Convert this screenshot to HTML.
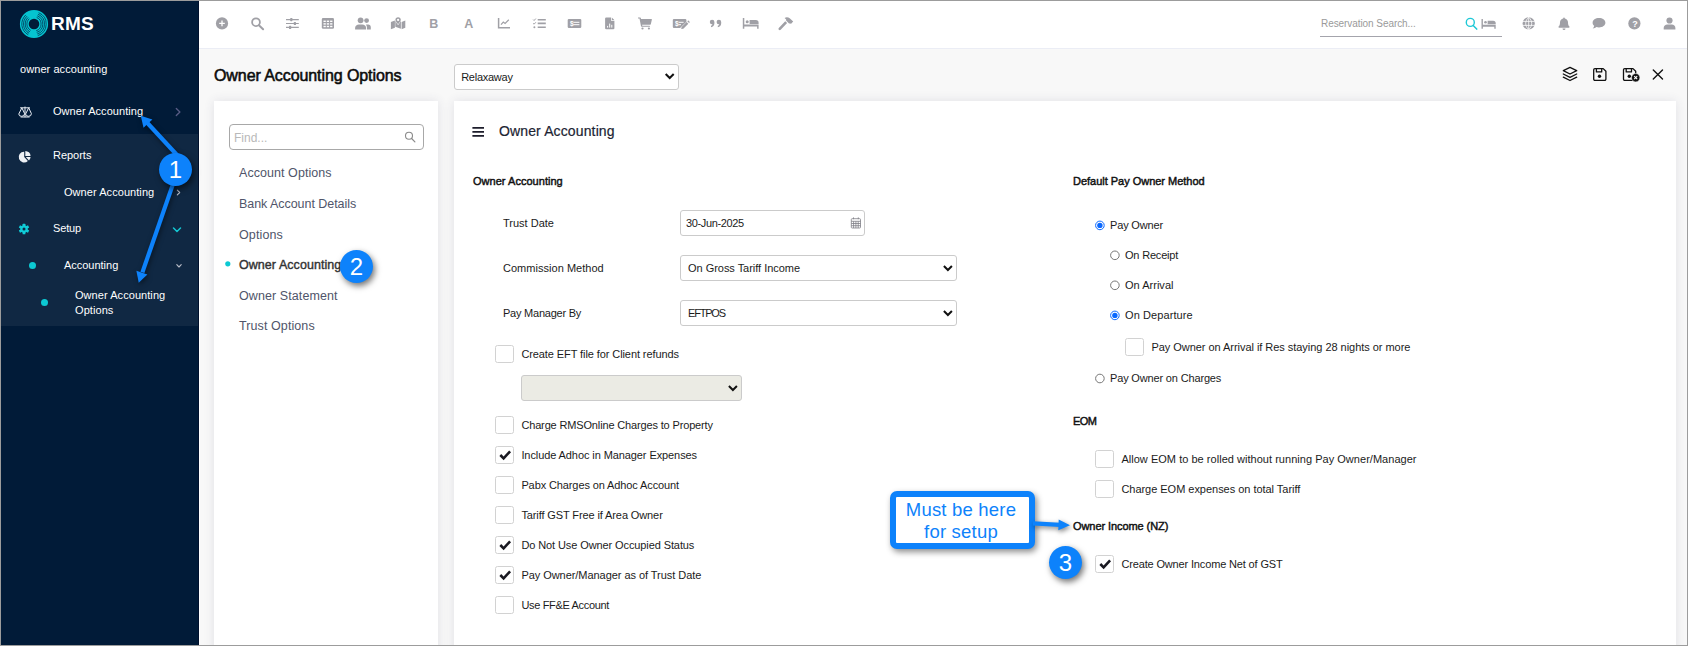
<!DOCTYPE html>
<html lang="en"><head><meta charset="utf-8"><title>Owner Accounting Options</title>
<style>
*{box-sizing:border-box}
html,body{margin:0;padding:0;width:1688px;height:646px;overflow:hidden;background:#f8f8f8;font-family:"Liberation Sans",sans-serif;font-size:11px;color:#1b1b1b}
.abs{position:absolute}
svg{position:absolute;overflow:visible}
#frame{position:absolute;left:0;top:0;width:1688px;height:646px;border:1px solid #9c9c9c;z-index:100;pointer-events:none}
#side{position:absolute;left:0;top:0;width:199px;height:646px;background:#011b38;box-shadow:inset -1px 0 0 #00102c}
#side .sec{position:absolute;left:0;top:134px;width:199px;height:192px;background:#102843;box-shadow:inset -1px 0 0 #00102c}
.t{position:absolute;color:#fff;font-size:11px;white-space:nowrap;line-height:15px}
.dot{position:absolute;width:7px;height:7px;border-radius:50%;background:#0cc9d3}
#top{position:absolute;left:199px;top:0;width:1489px;height:49px;background:#fff;border-bottom:1px solid #ebedf5}
#vline{position:absolute;left:199px;top:0;width:1px;height:646px;background:#fff}
.card{position:absolute;background:#fff;box-shadow:0 0 10px rgba(60,60,100,.12)}
.lbl{position:absolute;white-space:nowrap;font-size:11px;line-height:14px;color:#1b1b1b}
.hd{position:absolute;white-space:nowrap;font-size:11px;line-height:14px;font-weight:400;color:#111;-webkit-text-stroke:.45px #111}
.cb{position:absolute;width:19px;height:18px;border:1px solid #d2d2d2;border-radius:2.5px;background:#fff}
.sel{position:absolute;border:1px solid #cbcbcb;border-radius:3px;background:#fff;font-size:11px;line-height:24px;padding-left:7px;color:#1b1b1b;white-space:nowrap}
.nav{position:absolute;font-size:12.5px;color:#50556a;white-space:nowrap;line-height:16px}
.navsel{color:#333;font-weight:400;-webkit-text-stroke:.4px #333}
.num{position:absolute;width:33px;height:33px;border-radius:50%;background:#0d82fb;color:#fff;font-size:24px;line-height:33px;text-align:center;box-shadow:2px 3px 6px rgba(0,0,0,.55);z-index:50}
.call{position:absolute;left:890px;top:491px;width:145px;height:58px;border:6px solid #0d82fb;border-radius:7px;background:#fff;color:#0d82fb;font-size:18.5px;letter-spacing:.2px;line-height:21.6px;text-align:center;padding:2px 3px 0 0;box-shadow:2px 3px 6px rgba(0,0,0,.45);z-index:40}
.title{position:absolute;font-size:16px;font-weight:400;-webkit-text-stroke:.55px #0b0b0b;color:#0b0b0b;white-space:nowrap;line-height:20px}
.h2{position:absolute;font-size:14px;color:#1c2433;-webkit-text-stroke:.2px #1c2433;white-space:nowrap;line-height:18px}
.find{position:absolute;font-size:12px;color:#b9b9b9;line-height:14px;white-space:nowrap}
.rsv{position:absolute;font-size:10px;color:#9a9a9a;white-space:nowrap;line-height:14px;z-index:3}

</style></head><body>
<div id="side">
  <div class="sec"></div>
  <svg style="left:0;top:0" width="60" height="48" viewBox="0 0 60 48">
    <circle cx="34.0" cy="24.0" r="9.7" fill="none" stroke="#05c4d0" stroke-width="8.8"/>
    <path d="M36.66 17.42A7.1 7.1 0 0 1 36.19 30.75M30.67 30.27A7.1 7.1 0 0 1 29.25 18.72M37.30 15.84A8.8 8.8 0 0 1 36.72 32.37M29.87 31.77A8.8 8.8 0 0 1 28.11 17.46M37.93 14.26A10.5 10.5 0 0 1 37.24 33.99M29.07 33.27A10.5 10.5 0 0 1 26.97 16.20M38.57 12.69A12.2 12.2 0 0 1 37.77 35.60M28.27 34.77A12.2 12.2 0 0 1 25.84 14.93" fill="none" stroke="#012c4c" stroke-width=".85" opacity=".9"/>
  </svg>
  <div class="t" style="left:51px;top:14px;font-weight:700;font-size:19px;line-height:20px;letter-spacing:.2px">RMS</div>
  <div class="dot" style="left:29px;top:262px"></div>
  <div class="dot" style="left:41px;top:299px"></div>
</div>
<div id="vline"></div>
<div id="top">
    <div class="abs" style="left:1121px;top:36px;width:182px;height:1px;background:#a4a4ac"></div>
</div>
<div class="sel" style="left:454px;top:64px;width:225px;height:26px"></div>

<div class="card" style="left:214px;top:101px;width:224px;height:560px"></div>
<div class="abs" style="left:229px;top:124px;width:195px;height:26px;border:1px solid #a8a8a8;border-radius:4px;background:#fff"></div>

<div class="card" style="left:454px;top:101px;width:1222px;height:560px"></div>

<div class="sel" style="left:680px;top:210px;width:185px;height:26px;padding-left:6px"></div>
<div class="sel" style="left:680px;top:255px;width:277px;height:26px"></div>
<div class="sel" style="left:680px;top:300px;width:277px;height:26px"></div>
<div class="cb" style="left:495px;top:345px"></div>
<div class="sel" style="left:521px;top:375px;width:221px;height:26px;background:#ebebe4"></div>

<div class="cb" style="left:495px;top:416px"></div>
<div class="cb on" style="left:495px;top:446px"></div>
<div class="cb" style="left:495px;top:476px"></div>
<div class="cb" style="left:495px;top:506px"></div>
<div class="cb on" style="left:495px;top:536px"></div>
<div class="cb on" style="left:495px;top:566px"></div>
<div class="cb" style="left:495px;top:596px"></div>

<div class="cb" style="left:1125px;top:338px"></div>
<div class="cb" style="left:1095px;top:450px"></div>
<div class="cb" style="left:1095px;top:480px"></div>
<div class="cb on" style="left:1095px;top:555px"></div>

<div class="call">Must be here<br>for setup</div>
<div class="num" style="left:159px;top:153px">1</div>
<div class="num" style="left:340px;top:250px">2</div>
<div class="num" style="left:1049px;top:546px">3</div>
<div class="t" style="left:20px;top:62px;letter-spacing:0.07px;">owner accounting</div>
<div class="t" style="left:53px;top:104px;letter-spacing:0.05px;">Owner Accounting</div>
<div class="t" style="left:53px;top:148px;letter-spacing:-0.02px;">Reports</div>
<div class="t" style="left:64px;top:185px;letter-spacing:0.06px;">Owner Accounting</div>
<div class="t" style="left:53px;top:221px;letter-spacing:-0.15px;">Setup</div>
<div class="t" style="left:64px;top:258px;letter-spacing:-0.02px;">Accounting</div>
<div class="t" style="left:75px;top:288px;letter-spacing:0.06px;">Owner Accounting</div>
<div class="t" style="left:75px;top:303px;letter-spacing:0.07px;">Options</div>
<div class="nav" style="left:239px;top:165px;letter-spacing:0.06px;">Account Options</div>
<div class="nav" style="left:239px;top:196px;letter-spacing:-0.05px;">Bank Account Details</div>
<div class="nav" style="left:239px;top:227px;letter-spacing:0.12px;">Options</div>
<div class="nav navsel" style="left:239px;top:257px;letter-spacing:0.05px;">Owner Accounting</div>
<div class="nav" style="left:239px;top:288px;letter-spacing:0.09px;">Owner Statement</div>
<div class="nav" style="left:239px;top:318px;letter-spacing:0.09px;">Trust Options</div>
<div class="hd" style="left:473px;top:174px;letter-spacing:0.03px;">Owner Accounting</div>
<div class="lbl" style="left:503px;top:216px;letter-spacing:0.00px;">Trust Date</div>
<div class="lbl" style="left:503px;top:261px;letter-spacing:0.03px;">Commission Method</div>
<div class="lbl" style="left:503px;top:306px;letter-spacing:-0.23px;">Pay Manager By</div>
<div class="lbl" style="left:521.4px;top:347px;letter-spacing:-0.09px;">Create EFT file for Client refunds</div>
<div class="lbl" style="left:521.4px;top:418px;letter-spacing:-0.15px;">Charge RMSOnline Charges to Property</div>
<div class="lbl" style="left:521.4px;top:448px;letter-spacing:-0.09px;">Include Adhoc in Manager Expenses</div>
<div class="lbl" style="left:521.4px;top:478px;letter-spacing:-0.11px;">Pabx Charges on Adhoc Account</div>
<div class="lbl" style="left:521.4px;top:508px;letter-spacing:-0.11px;">Tariff GST Free if Area Owner</div>
<div class="lbl" style="left:521.4px;top:538px;letter-spacing:-0.10px;">Do Not Use Owner Occupied Status</div>
<div class="lbl" style="left:521.4px;top:568px;letter-spacing:-0.05px;">Pay Owner/Manager as of Trust Date</div>
<div class="lbl" style="left:521.4px;top:598px;letter-spacing:-0.33px;">Use FF&amp;E Account</div>
<div class="hd" style="left:1073px;top:174px;letter-spacing:-0.02px;">Default Pay Owner Method</div>
<div class="lbl" style="left:1110px;top:218px;letter-spacing:-0.16px;">Pay Owner</div>
<div class="lbl" style="left:1125px;top:248px;letter-spacing:-0.19px;">On Receipt</div>
<div class="lbl" style="left:1125px;top:278px;letter-spacing:0.02px;">On Arrival</div>
<div class="lbl" style="left:1125px;top:308px;letter-spacing:0.09px;">On Departure</div>
<div class="lbl" style="left:1151.4px;top:340px;letter-spacing:-0.04px;">Pay Owner on Arrival if Res staying 28 nights or more</div>
<div class="lbl" style="left:1110px;top:371px;letter-spacing:-0.16px;">Pay Owner on Charges</div>
<div class="hd" style="left:1073px;top:414px;letter-spacing:-0.52px;">EOM</div>
<div class="lbl" style="left:1121.4px;top:452px;letter-spacing:0.03px;">Allow EOM to be rolled without running Pay Owner/Manager</div>
<div class="lbl" style="left:1121.4px;top:482px;letter-spacing:-0.03px;">Charge EOM expenses on total Tariff</div>
<div class="hd" style="left:1073px;top:519px;letter-spacing:-0.08px;">Owner Income (NZ)</div>
<div class="lbl" style="left:1121.4px;top:557px;letter-spacing:-0.15px;">Create Owner Income Net of GST</div>
<div class="lbl" style="left:461.2px;top:70px;letter-spacing:-0.26px;">Relaxaway</div>
<div class="lbl" style="left:686px;top:216px;letter-spacing:-0.37px;">30-Jun-2025</div>
<div class="lbl" style="left:688px;top:261px;letter-spacing:-0.03px;">On Gross Tariff Income</div>
<div class="lbl" style="left:688px;top:306px;letter-spacing:-1.20px;">EFTPOS</div>
<div class="title" style="left:214px;top:66px;letter-spacing:-0.08px;">Owner Accounting Options</div>
<div class="h2" style="left:499px;top:122px;letter-spacing:0.13px;">Owner Accounting</div>
<div class="find" style="left:234px;top:131px;">Find...</div>
<div class="rsv" style="left:1321px;top:17px;letter-spacing:-0.07px;">Reservation Search...</div>

<svg style="left:0;top:0;z-index:5" width="1688" height="48" viewBox="0 0 1688 48">
<g fill="#a0a0a6" stroke="none">
  <!-- 1 plus-circle -->
  <circle cx="222" cy="23.4" r="6.1"/>
  <path d="M219.2 23.4h5.6M222 20.6v5.6" stroke="#fff" stroke-width="1.3" fill="none"/>
  <!-- 2 search -->
  <circle cx="256" cy="22.2" r="3.9" fill="none" stroke="#a0a0a6" stroke-width="1.8"/>
  <path d="M258.9 25.2l4.2 4.1" stroke="#a0a0a6" stroke-width="2" stroke-linecap="round" fill="none"/>
  <!-- 3 sliders -->
  <path d="M286 19.6h12.8M286 23.5h12.8M286 27.4h12.8" stroke="#a0a0a6" stroke-width="1.1" fill="none"/>
  <rect x="290.2" y="18" width="2.2" height="3.2" rx=".6"/><rect x="293.8" y="21.9" width="2.2" height="3.2" rx=".6"/><rect x="289" y="25.8" width="2.2" height="3.2" rx=".6"/>
  <!-- 4 table -->
  <rect x="321.800" y="18.100" width="12.200" height="10.700" rx="1.300"/>
  <g fill="#fff"><rect x="323.500" y="20.600" width="2.300" height="1.400"/><rect x="326.800" y="20.600" width="2.300" height="1.400"/><rect x="330.100" y="20.600" width="2.300" height="1.400"/><rect x="323.500" y="23.200" width="2.300" height="1.400"/><rect x="326.800" y="23.200" width="2.300" height="1.400"/><rect x="330.100" y="23.200" width="2.300" height="1.400"/><rect x="323.500" y="25.800" width="2.300" height="1.400"/><rect x="326.800" y="25.800" width="2.300" height="1.400"/><rect x="330.100" y="25.800" width="2.300" height="1.400"/></g>
  <!-- 5 users -->
  <circle cx="360.6" cy="20.3" r="2.9"/><path d="M355.1 29.6v-1.6c0-2.2 1.8-3.6 3.8-3.6h3.4c2 0 3.8 1.4 3.8 3.6v1.6z"/>
  <circle cx="366.6" cy="20.6" r="2.4"/><path d="M367 29.6v-1.9c0-1.200-.4-2.200-1.100-3.000c.3-.1.700-.2 1.100-.2h1.200c1.500 0 2.600 1.100 2.600 2.700v2.400z"/>
  <!-- 6 map-marked -->
  <path d="M390.900 21.900l4.000-1.500v7.400l-4.000 1.500z"/>
  <path d="M395.700 21.200c.5 1.300 1.500 2.700 2.400 3.700c.9-1.000 1.900-2.400 2.400-3.700l.4.150v7.500l-5.600-2.000v-5.800z"/>
  <path d="M401.600 21.900l3.700-1.400v7.300l-3.700 1.400z"/>
  <path fill-rule="evenodd" d="M398.100 17.200c1.600 0 2.700 1.200 2.700 2.600c0 1.400-1.700 3.400-2.700 4.400c-1.000-1.000-2.700-3.000-2.700-4.400c0-1.400 1.100-2.600 2.700-2.600zm0 1.600a1.100 1.100 0 1 0 0 2.200a1.100 1.100 0 0 0 0-2.200z"/>
  <!-- 9 chart-line -->
  <path d="M498.600 18.100v9.600h11.400" stroke="#a0a0a6" stroke-width="1.500" fill="none"/>
  <path d="M501.000 24.600l2.300-2.600l1.800 1.400l3.700-3.600" stroke="#a0a0a6" stroke-width="1.200" fill="none"/>
  <!-- 10 tasks -->
  <path d="M537.700 19.700h8.100M537.700 23.400h8.100M537.700 27.200h8.100" stroke="#a0a0a6" stroke-width="1.600" fill="none"/>
  <path d="M533.200 19.600l.9.900l1.700-1.900M533.200 23.300l.9.900l1.700-1.900" stroke="#a0a0a6" stroke-width="1" fill="none"/>
  <circle cx="534.400" cy="27.300" r="1"/>
  <!-- 11 money-check -->
  <rect x="567.700" y="18.900" width="13.600" height="9" rx="1.200"/>
  <path d="M573.400 22.300h6M573.400 24.700h6" stroke="#fff" stroke-width="1" fill="none"/>
  <!-- 12 file-chart -->
  <path d="M606.200 17.400h4.800v3.400h3.400v7.400a1.100 1.100 0 0 1-1.100 1.100h-7.100a1.100 1.100 0 0 1-1.100-1.100v-9.700a1.100 1.100 0 0 1 1.100-1.100zM611.800 17.500l2.500 2.500h-2.500z"/>
  <path d="M607.600 27.600v-1.700M609.700 27.600v-4M611.800 27.600v-2.800" stroke="#fff" stroke-width="1" fill="none"/>
  <!-- 13 cart -->
  <path d="M638.000 17.400h2.200c.3 0 .5.200.6.500l.2 1.000h10.400c.4 0 .6.300.5.700l-1.100 4.700c-.1.300-.3.500-.6.500h-8.100l.2.900h7.200c.3 0 .5.300.5.600l-.1.500h-8.300c-.3 0-.5-.2-.6-.5l-1.500-7.800h-1.500z"/>
  <circle cx="642.500" cy="28.500" r="1.100"/><circle cx="648.900" cy="28.500" r="1.100"/>
  <!-- 14 money-check-edit -->
  <path d="M674.000 18.900h11.200a1.200 1.200 0 0 1 1.200 1.200v1.600l-6.300 6.200h-6.100a1.200 1.200 0 0 1-1.200-1.200v-6.600a1.200 1.200 0 0 1 1.200-1.200z"/>
  <path d="M678.600 22.300h5M678.600 24.700h2.400" stroke="#fff" stroke-width="1" fill="none"/>
  <path d="M681.200 29.100l.4-2.100l5.000-5.000l1.700 1.700l-5.000 5.000zM687.300 21.300l.6-.6c.2-.2.500-.2.700 0l1.000 1.000c.2.200.2.500 0 .7l-.6.600z"/>
  <!-- 15 quote-right -->
  <path d="M709.800 22.000a2.300 2.300 0 1 1 4.600 0v1.300c0 2.200-1.400 3.700-3.400 3.900v-1.500c.8-.2 1.300-.8 1.400-1.500a2.300 2.300 0 0 1-2.600-2.200zM716.600 22.000a2.300 2.300 0 1 1 4.600 0v1.300c0 2.200-1.400 3.700-3.400 3.900v-1.500c.8-.2 1.300-.8 1.400-1.500a2.300 2.300 0 0 1-2.600-2.200z"/>
  <!-- 16 bed -->
  <path d="M742.800 18.100h1.500v6.400h14.300v4.300h-1.500v-2.200h-12.800v2.200h-1.500z"/>
  <circle cx="747.200" cy="21.700" r="1.500"/>
  <path d="M749.600 19.900h6.200a2.800 2.800 0 0 1 2.800 2.800v1.200h-9z"/>
  <!-- 17 hammer -->
  <path d="M778.800 27.900l6.400-6.600l1.900 1.800l-6.400 6.600a1.300 1.300 0 0 1-1.900-1.800z"/>
  <path d="M784.600 18.000c1.700-1.100 3.800-.7 5.100.3l3.500 3.300l-2.300 2.300l-.8-.7c-.4.300-.9.300-1.300 0l-2.500-2.400c-.3-.3-.3-.8-.1-1.200z"/>
  <!-- right side: bed -->
  <path d="M1481.500 19.000h1.400v5.700h12.800v4.000h-1.400v-2.000h-11.400v2.000h-1.400z"/>
  <circle cx="1485.500" cy="22.300" r="1.300"/>
  <path d="M1487.600 20.700h5.600a2.500 2.500 0 0 1 2.500 2.500v1.000h-8.100z"/>
  <!-- globe -->
  <circle cx="1528.700" cy="23.400" r="6.100"/>
  <path d="M1522.600 21.400h12.200M1522.600 25.400h12.200M1528.700 17.300v12.200M1528.700 17.300c-4 3.500-4 8.700 0 12.200M1528.700 17.300c4 3.500 4 8.700 0 12.200" stroke="#fff" stroke-width=".8" fill="none"/>
  <!-- bell -->
  <path d="M1564.000 17.400c.5 0 .8.300.8.800v.3c2 .4 3.200 2 3.200 4.000c0 2.300.6 3.300 1.400 4.100c.4.400.1 1.200-.5 1.200h-9.800c-.6 0-.9-.8-.5-1.200c.8-.8 1.400-1.800 1.400-4.100c0-2.000 1.200-3.600 3.200-4.000v-.3c0-.5.300-.8.800-.8zM1562.500 28.400h3.000a1.500 1.500 0 0 1-3.000 0z"/>
  <!-- comment -->
  <path d="M1599.000 18.000c3.500 0 6.400 2.100 6.400 4.700s-2.900 4.700-6.400 4.700c-.9 0-1.800-.1-2.600-.4c-.8.600-2.100 1.500-3.700 1.500c.8-.8 1.400-1.800 1.500-2.700c-1-.8-1.600-1.900-1.600-3.100c0-2.600 2.900-4.700 6.400-4.700z"/>
  <!-- help -->
  <circle cx="1634.400" cy="23.400" r="6.100"/>
  <!-- user -->
  <circle cx="1669.500" cy="20.500" r="3.100"/>
  <path d="M1663.700 29.400v-1.400c0-2.100 1.700-3.500 3.600-3.500h4.500c1.900 0 3.600 1.400 3.600 3.500v1.400z"/>
</g>
<text x="570.000" y="26.400" font-family="Liberation Sans, sans-serif" font-size="6.500" font-weight="700" fill="#fff">$</text>
<text x="675.100" y="26.400" font-family="Liberation Sans, sans-serif" font-size="6.500" font-weight="700" fill="#fff">$</text>
<text x="1632.200" y="26.600" font-family="Liberation Sans, sans-serif" font-size="9" font-weight="700" fill="#fff">?</text>
<text x="429.300" y="28.000" font-family="Liberation Sans, sans-serif" font-size="12.500" font-weight="700" fill="#a0a0a6">B</text>
<text x="464.200" y="28.000" font-family="Liberation Sans, sans-serif" font-size="12.500" font-weight="700" fill="#a0a0a6">A</text>
<!-- cyan search -->
<circle cx="1470.300" cy="22.400" r="4.000" fill="none" stroke="#1ec8d6" stroke-width="1.400"/>
<path d="M1473.200 25.400l3.500 3.700" stroke="#1ec8d6" stroke-width="1.500" stroke-linecap="round" fill="none"/>
</svg>

<svg style="left:0;top:0;z-index:6" width="1688" height="646" viewBox="0 0 1688 646">
<!-- action icons -->
<g fill="none" stroke="#111" stroke-width="1.300" stroke-linejoin="round" stroke-linecap="round">
  <path d="M1570.000 67.400l6.700 3.300l-6.700 3.300l-6.700-3.300z"/>
  <path d="M1563.300 74.000l6.700 3.300l6.700-3.300"/>
  <path d="M1563.300 77.200l6.700 3.300l6.700-3.300"/>
  <path d="M1594.900 68.600h8.300l2.700 2.700v7.800a1.200 1.200 0 0 1-1.200 1.200h-9.800a1.200 1.200 0 0 1-1.200-1.200v-9.300a1.200 1.200 0 0 1 1.200-1.200z"/>
  <path d="M1596.400 68.800v3.100h5.300v-3.100"/>
  <path d="M1624.700 68.600h8.300l2.700 2.700v7.800a1.200 1.200 0 0 1-1.200 1.200h-9.800a1.200 1.200 0 0 1-1.200-1.200v-9.300a1.200 1.200 0 0 1 1.200-1.200z"/>
  <path d="M1626.200 68.800v3.100h5.300v-3.100"/>
  <path d="M1653.300 70.000l9.200 9.000M1662.500 70.000l-9.200 9.000" stroke-width="1.400"/>
</g>
<circle cx="1599.500" cy="76.300" r="1.700" fill="#111"/>
<circle cx="1629.300" cy="76.300" r="1.700" fill="#111"/>
<circle cx="1635.700" cy="77.700" r="4.200" fill="#111" stroke="#f5f5f5" stroke-width=".6"/>
<path d="M1634.200 76.200l3.000 3.000M1637.200 76.200l-3.000 3.000" stroke="#fff" stroke-width="1.100" fill="none"/>

<!-- sidebar icons -->
<g fill="none" stroke="#e9eef5" stroke-width="1" stroke-linecap="round" stroke-linejoin="round">
  <path d="M20.500 107.800h9.000M25.000 107.000v9.800M21.000 117.000h8.200" />
  <path d="M21.700 108.200l-2.900 5.800a2.900 2.300 0 0 0 5.800 0zM28.500 108.200l-2.900 5.800a2.900 2.300 0 0 0 5.800 0z"/>
  <path d="M176.300 108.500l3.600 3.500l-3.600 3.500" stroke="#5a5d86" stroke-width="1.300"/>
  <path d="M177.300 190.200l2.400 2.300l-2.400 2.300" stroke="#b9bdc8" stroke-width="1.100"/>
  <path d="M173.500 228.000l3.500 3.500l3.500-3.500" stroke="#14c6d2" stroke-width="1.500"/>
  <path d="M176.800 264.700l2.200 2.300l2.200-2.300" stroke="#b9bdc8" stroke-width="1.100"/>
</g>
<!-- pie -->
<path d="M24.200 151.700v5.300l3.700 3.900a5.400 5.400 0 1 1-3.700-9.200z" fill="#eef1f6"/>
<path d="M25.300 150.900a5.400 5.400 0 0 1 5.300 5.000h-5.300z" fill="#eef1f6"/>
<path d="M25.800 157.000h4.800a5.400 5.400 0 0 1-1.600 3.400z" fill="#eef1f6"/>
<!-- gear -->
<g transform="translate(24.000 229.000)" fill="#10cdd8">
  <circle r="3.700"/>
  <g id="tooth"><rect x="-1.400" y="-5.300" width="2.800" height="3" rx=".5"/></g>
  <rect x="-1.400" y="-5.300" width="2.800" height="3" rx=".5" transform="rotate(60)"/>
  <rect x="-1.400" y="-5.300" width="2.800" height="3" rx=".5" transform="rotate(120)"/>
  <rect x="-1.400" y="-5.300" width="2.800" height="3" rx=".5" transform="rotate(180)"/>
  <rect x="-1.400" y="-5.300" width="2.800" height="3" rx=".5" transform="rotate(240)"/>
  <rect x="-1.400" y="-5.300" width="2.800" height="3" rx=".5" transform="rotate(300)"/>
  <circle r="1.500" fill="#102843"/>
</g>

<!-- find search icon -->
<circle cx="409.000" cy="135.800" r="3.500" fill="none" stroke="#8a8a8a" stroke-width="1.100"/>
<path d="M411.600 138.500l3.300 3.400" stroke="#8a8a8a" stroke-width="1.200" stroke-linecap="round"/>

<!-- select chevrons -->
<g fill="none" stroke="#111" stroke-width="2" stroke-linecap="butt" stroke-linejoin="miter">
  <path d="M665.700 74.000l4.000 4.000l4.000-4.000"/>
  <path d="M943.900 266.000l4.000 4.000l4.000-4.000"/>
  <path d="M943.900 311.000l4.000 4.000l4.000-4.000"/>
  <path d="M728.900 386.000l4.000 4.000l4.000-4.000"/>
</g>
<!-- calendar -->
<g fill="none" stroke="#7d7d85" stroke-width=".8">
  <rect x="851.300" y="218.700" width="9.200" height="9.300" rx=".8"/>
  <path d="M851.300 221.300h9.200M851.300 223.500h9.200M851.300 225.700h9.200M853.600 221.300v6.700M855.900 221.300v6.700M858.200 221.300v6.700M853.500 217.400v1.800M858.300 217.400v1.800"/>
</g>
<!-- checkmarks -->
<g fill="none" stroke="#1a1a22" stroke-width="2.600" stroke-linejoin="miter">
  <path id="ck" d="M500.300 455.000l3.300 3.300l6.500-7.000"/>
  <path d="M500.300 545.000l3.300 3.300l6.500-7.000"/>
  <path d="M500.300 575.000l3.300 3.300l6.500-7.000"/>
  <path d="M1100.300 564.000l3.300 3.300l6.500-7.000"/>
</g>
<path d="M472.400 127.900h11.600M472.400 131.900h11.600M472.400 135.900h11.600" stroke="#1d1d2b" stroke-width="1.700" fill="none"/>
<circle cx="227.800" cy="263.800" r="2.600" fill="#0cc9d3"/>
<!-- radios -->
<g fill="#fff" stroke="#767676" stroke-width="1">
  <circle cx="1114.900" cy="255.300" r="4.300"/><circle cx="1114.900" cy="285.300" r="4.300"/><circle cx="1099.900" cy="378.500" r="4.300"/>
</g>
<g fill="#fff" stroke="#0a68ff" stroke-width="1">
  <circle cx="1099.900" cy="225.400" r="4.300"/><circle cx="1114.900" cy="315.400" r="4.300"/>
</g>
<g fill="#0a68ff"><circle cx="1099.900" cy="225.400" r="2.700"/><circle cx="1114.900" cy="315.400" r="2.700"/></g>
</svg>

<svg style="left:0;top:0;z-index:45;filter:drop-shadow(1.5px 2.5px 2.5px rgba(0,0,0,.5))" width="1688" height="646" viewBox="0 0 1688 646">
<g stroke="#0d82fb" stroke-width="4.200" fill="none" stroke-linecap="butt">
  <path d="M177.000 155.000L147.200 122.800"/>
  <path d="M177.300 171.600L142.400 272.400"/>
  <path d="M1033.000 523.400L1060.000 524.800"/>
</g>
<g fill="#0d82fb" stroke="none">
  <polygon points="140.800,115.800 152.400,119.600 143.500,127.700"/>
  <polygon points="138.700,282.800 136.400,270.800 147.400,274.400"/>
  <polygon points="1070.000,525.200 1058.700,519.400 1058.300,530.300"/>
</g>
</svg>

<div id="frame"></div>

</body></html>
